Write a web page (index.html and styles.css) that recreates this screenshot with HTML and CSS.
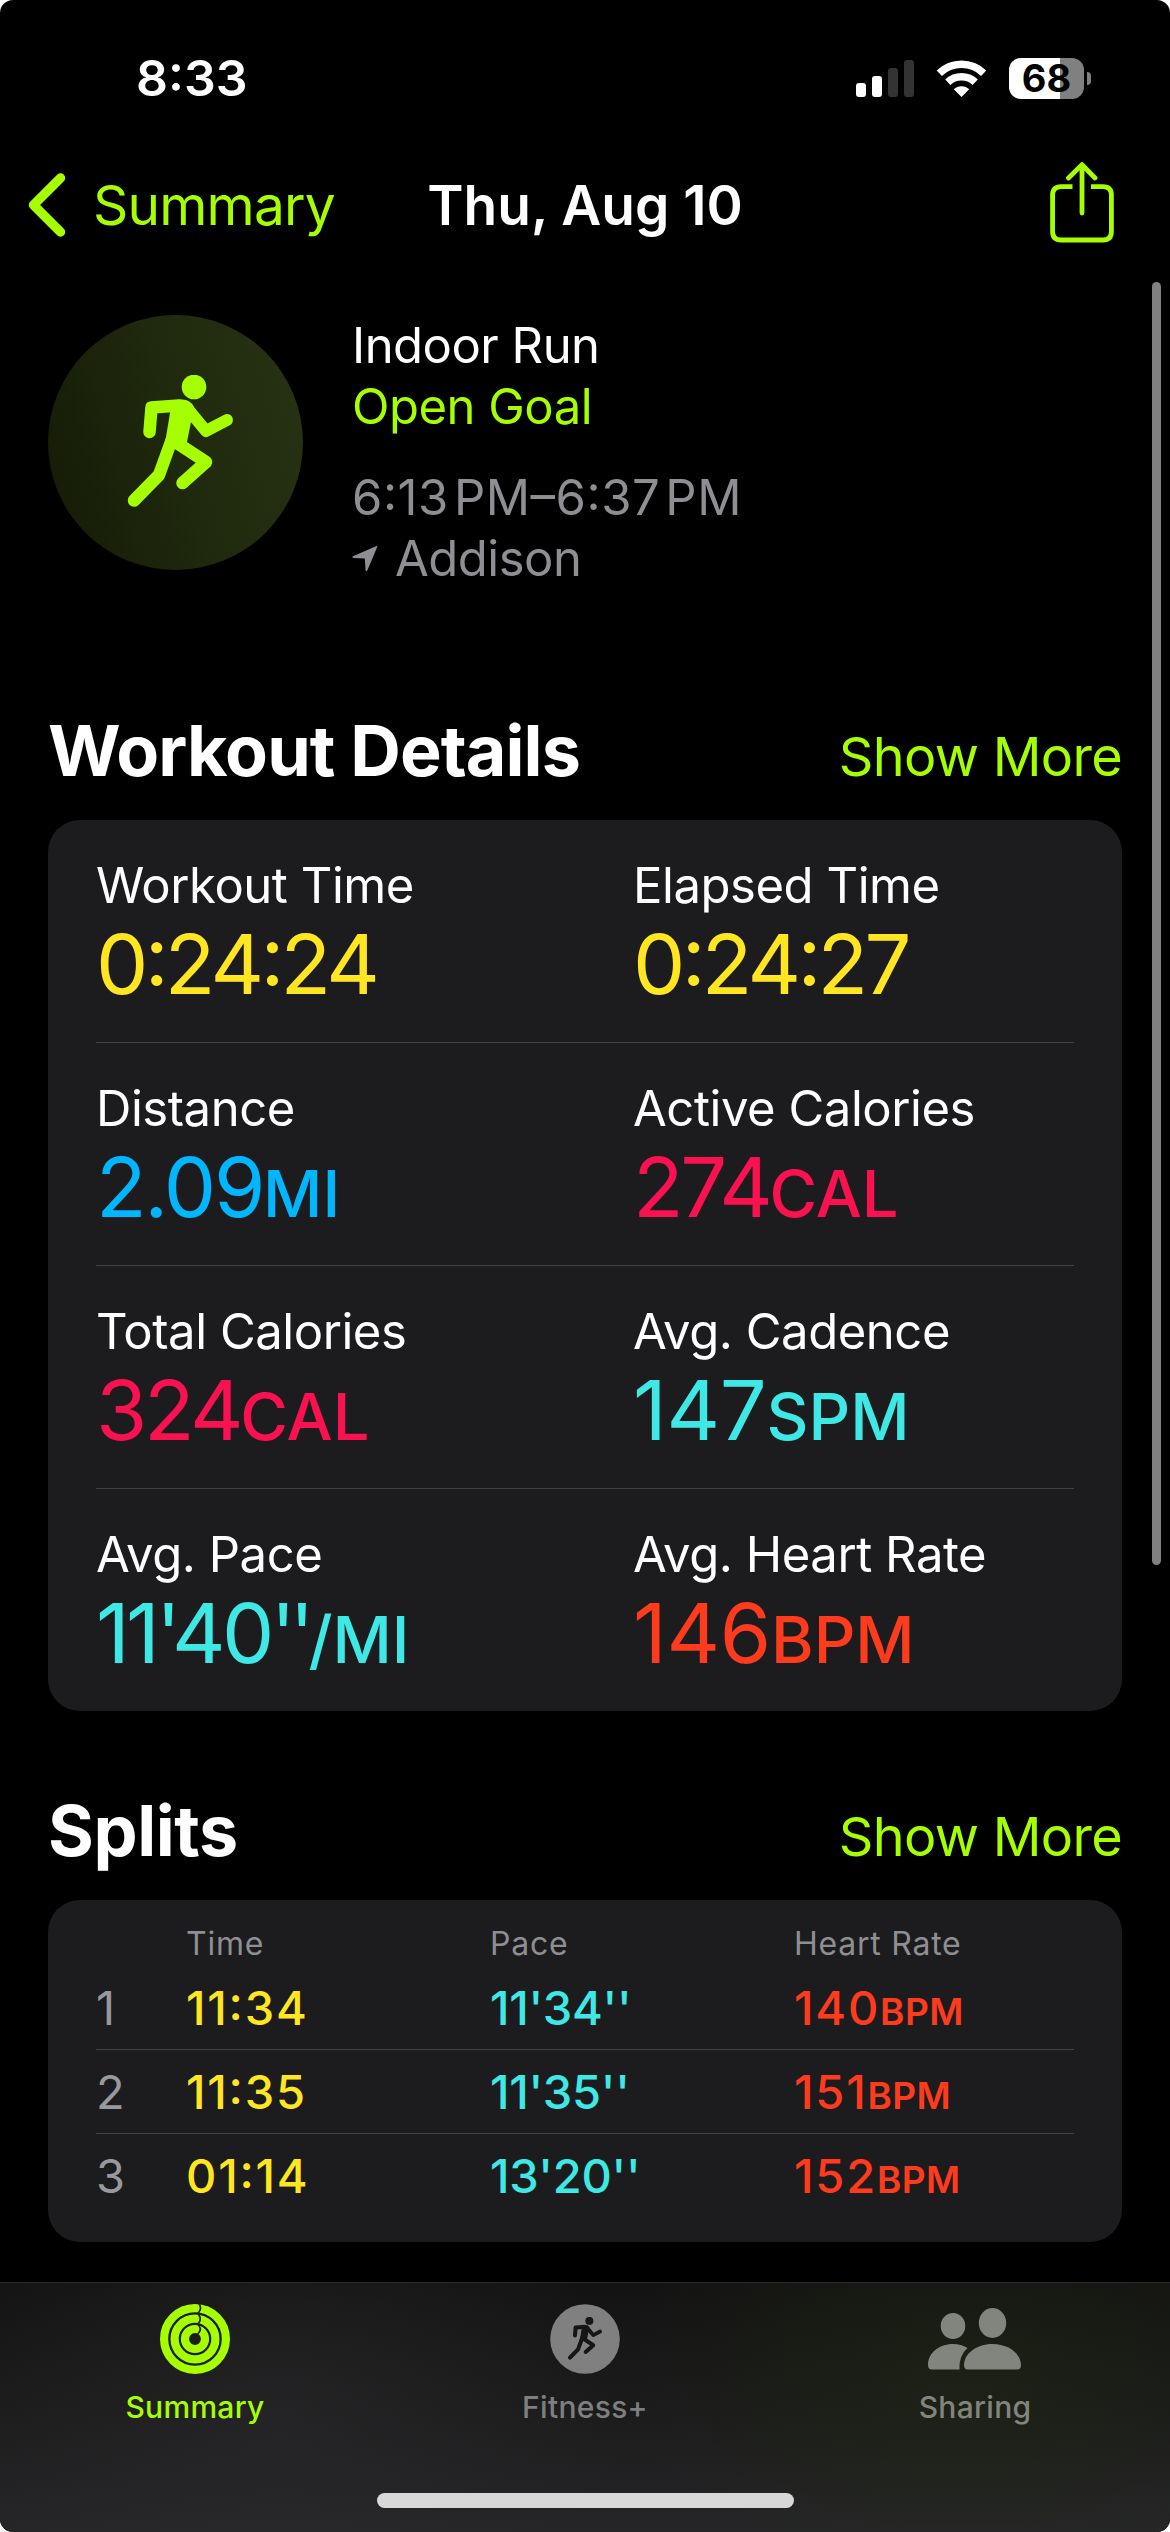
FILE: index.html
```html
<!DOCTYPE html>
<html lang="en">
<head>
    <meta charset="UTF-8">
    <meta name="viewport" content="width=device-width, initial-scale=1.0">
    <title>Thu, Aug 10</title>
    <link rel="stylesheet" href="styles.css">
</head>
<body>
    <svg class="defs" width="0" height="0">
        <symbol id="runner" viewBox="0 0 110 136">
            <circle cx="67" cy="12" r="12.3"/>
            <path d="M22.5 57 L24.5 32.5 L52 30.5" fill="none" stroke="currentColor" stroke-width="12.5" stroke-linecap="round" stroke-linejoin="round"/>
            <path d="M43 38 Q42 26 53 24.6 Q63 23.5 67 32 L60 67 L42 74 L37 74 Z"/>
            <path d="M60 33 L79 56 L100 45" fill="none" stroke="currentColor" stroke-width="12" stroke-linecap="round" stroke-linejoin="round"/>
            <path d="M50 68 L79 87 L55.5 108" fill="none" stroke="currentColor" stroke-width="12.5" stroke-linecap="round" stroke-linejoin="round"/>
            <path d="M45 64 L32 100 L7 125.500" fill="none" stroke="currentColor" stroke-width="12.5" stroke-linecap="round" stroke-linejoin="round"/>
        </symbol>
    </svg>

    <div class="screen">
        <header class="status-bar">
            <span class="clock">8:33</span>
            <div class="status-icons">
                <svg width="58" height="37" viewBox="0 0 58 37">
                    <rect x="0" y="23" width="10" height="14" rx="3" fill="#fff"/>
                    <rect x="16" y="16" width="10" height="21" rx="3" fill="#fff"/>
                    <rect x="32" y="8" width="10" height="29" rx="3" fill="#333"/>
                    <rect x="48" y="0" width="10" height="37" rx="3" fill="#333"/>
                </svg>
                <svg class="wifi" width="51" height="37" viewBox="0 0 51 37">
                    <path d="M3.3 13.2 A32 32 0 0 1 47.7 13.2" fill="none" stroke="#fff" stroke-width="7.5"/>
                    <path d="M11.8 22.2 A20 20 0 0 1 39.2 22.2" fill="none" stroke="#fff" stroke-width="7.5"/>
                    <path d="M25.5 37 L17.8 29.3 A11 11 0 0 1 33.2 29.3 Z" fill="#fff"/>
                </svg>
                <div class="battery"><span>68</span></div>
                <div class="battery-nub"></div>
            </div>
        </header>

        <nav class="nav-bar">
            <a class="back">
                <svg width="38" height="64" viewBox="0 0 38 64">
                    <path d="M32.5 5 L5.5 32 L32.5 59" fill="none" stroke="#a6ff00" stroke-width="9.5" stroke-linecap="round" stroke-linejoin="round"/>
                </svg>
                <span>Summary</span>
            </a>
            <h1>Thu, Aug 10</h1>
            <svg class="share" width="64" height="81" viewBox="0 0 64 81">
                <g fill="none" stroke="#a6ff00" stroke-width="4.8">
                    <path d="M22.5 24.6 H11 Q2.6 24.6 2.6 33 V69.5 Q2.6 78 11 78 H53 Q61.4 78 61.4 69.5 V33 Q61.4 24.6 53 24.6 H41"/>
                    <path d="M32 3 V51 M18.5 16 L32 2.6 L45 16" stroke-linecap="round" stroke-linejoin="round"/>
                </g>
            </svg>
        </nav>

        <main>
            <section class="hero">
                <div class="hero-icon">
                    <svg width="110" height="136"><use href="#runner"/></svg>
                </div>
                <div class="hero-text">
                    <p class="run">Indoor Run</p>
                    <p class="goal">Open Goal</p>
                    <p class="when">6:13&#8202;PM–6:37&#8202;PM</p>
                    <p class="place">
                        <svg width="26" height="27" viewBox="0 0 26 27">
                            <path d="M24 1.2 Q26 0 25 2.5 L15.5 25 Q14.3 27.5 13.5 25 L12.8 13.5 L1.5 13 Q-1 12 1.5 11 Z" fill="#8e8e93"/>
                        </svg>
                        <span>Addison</span>
                    </p>
                </div>
            </section>

            <section class="block details">
                <div class="block-head">
                    <h2>Workout Details</h2>
                    <a>Show More</a>
                </div>
                <div class="card">
                    <div class="detail-row">
                        <div class="detail"><p>Workout Time</p><div class="value time yellow">0:24:24</div></div>
                        <div class="detail"><p>Elapsed Time</p><div class="value time yellow">0:24:27</div></div>
                    </div>
                    <div class="detail-row">
                        <div class="detail"><p>Distance</p><div class="value distance blue">2.09<small>MI</small></div></div>
                        <div class="detail"><p>Active Calories</p><div class="value calories pink">274<small>CAL</small></div></div>
                    </div>
                    <div class="detail-row">
                        <div class="detail"><p>Total Calories</p><div class="value calories pink">324<small>CAL</small></div></div>
                        <div class="detail"><p>Avg. Cadence</p><div class="value teal">147<small>SPM</small></div></div>
                    </div>
                    <div class="detail-row">
                        <div class="detail"><p>Avg. Pace</p><div class="value time teal">11'40<span class="seconds">''</span><small>/MI</small></div></div>
                        <div class="detail"><p>Avg. Heart Rate</p><div class="value red">146<small>BPM</small></div></div>
                    </div>
                </div>
            </section>

            <section class="block splits">
                <div class="block-head">
                    <h2>Splits</h2>
                    <a>Show More</a>
                </div>
                <div class="card splits-card">
                    <div class="split-head"><span></span><span>Time</span><span>Pace</span><span>Heart Rate</span></div>
                    <div class="split-row">
                        <span class="index">1</span><span class="yellow">11:34</span><span class="pace teal">11'34''</span><span class="red">140<small>BPM</small></span>
                    </div>
                    <div class="split-row">
                        <span class="index">2</span><span class="yellow">11:35</span><span class="pace teal">11'35''</span><span class="red">151<small>BPM</small></span>
                    </div>
                    <div class="split-row">
                        <span class="index">3</span><span class="yellow">01:14</span><span class="pace teal">13'20''</span><span class="red">152<small>BPM</small></span>
                    </div>
                </div>
            </section>
        </main>

        <footer class="tab-bar">
            <div class="tabs">
                <a class="tab active">
                    <svg width="72" height="72" viewBox="0 0 72 72">
                        <g fill="none" stroke="#a6ff00" stroke-width="8.2">
                            <circle cx="36" cy="36" r="30.9"/>
                            <circle cx="36" cy="36" r="20.4"/>
                            <circle cx="36" cy="36" r="10"/>
                        </g>
                        <g fill="none" stroke="#20211f" stroke-width="1.7">
                            <path d="M40 0.5 Q43 5 40 9 L38.5 10.5"/>
                            <path d="M39 10.8 Q43 15.5 40 19.5 L38.5 21"/>
                            <path d="M39 21.3 Q43 26 40 29.5 L38 31.5"/>
                        </g>
                    </svg>
                    <span>Summary</span>
                </a>
                <a class="tab">
                    <svg width="72" height="72" viewBox="0 0 72 72">
                        <circle cx="36" cy="36" r="34.8" fill="#808080"/>
                        <use href="#runner" class="tab-runner" x="18.5" y="14" width="36" height="44"/>
                    </svg>
                    <span>Fitness+</span>
                </a>
                <a class="tab sharing">
                    <svg width="96" height="72" viewBox="0 0 96 72" fill="#82857d">
                        <ellipse cx="26" cy="23" rx="12.3" ry="13"/>
                        <ellipse cx="65.5" cy="20" rx="13.7" ry="15"/>
                        <path d="M5 66.5 Q1 66.5 1 62 C1 50 12 41 26 41 Q34 41 40.5 45 Q31.5 53 32.5 66.5 Z"/>
                        <path d="M41 66.5 Q37 66.5 37 62 C37 51 49 41 65.5 41 C82 41 94 51 94 62 Q94 66.5 90 66.5 Z"/>
                    </svg>
                    <span>Sharing</span>
                </a>
            </div>
            <div class="home-indicator"></div>
        </footer>

        <div class="scroll-thumb"></div>
    </div>
</body>
</html>
```
FILE: styles.css
```css
* {
    box-sizing: border-box;
}
body {
    margin: 0;
    background: #fff;
    font-family: Inter, "Liberation Sans", sans-serif;
    font-feature-settings: "calt" 1; /* keeps the raised colon in times */
    color: #fff;
}
h1, h2, p {
    margin: 0;
}
svg {
    display: block;
    flex: none;
}
.defs {
    position: absolute;
}
.screen {
    position: relative;
    width: 1170px;
    height: 2532px;
    background: #000;
    border-radius: 13px;
    overflow: hidden;
    display: flex;
    flex-direction: column;
}

/* status bar */
.status-bar {
    height: 156px;
    padding: 0 79px 0 136px;
    display: flex;
    justify-content: space-between;
    align-items: center;
}
.clock {
    font-size: 50px;
    font-weight: 600;
}
.status-icons {
    display: flex;
    align-items: center;
}
.wifi {
    margin: 0 22px;
}
.battery {
    width: 75px;
    height: 41px;
    border-radius: 12px;
    background: linear-gradient(90deg, #fff 51px, #808080 51px);
    color: #000;
    font-size: 38px;
    font-weight: 700;
    line-height: 41px;
    text-align: center;
}
.battery-nub {
    width: 4px;
    height: 13px;
    margin-left: 3px;
    border-radius: 0 4px 4px 0;
    background: #808080;
}

/* nav bar */
.nav-bar {
    height: 98px;
    padding: 0 28px;
    display: grid;
    grid-template-columns: 1fr auto 1fr;
    align-items: center;
}
.back {
    display: flex;
    align-items: center;
    gap: 27px;
    font-size: 55px;
    letter-spacing: -0.8px;
    color: #a6ff00;
}
.nav-bar h1 {
    font-size: 55px;
    font-weight: 600;
}
.share {
    justify-self: end;
    margin: 0 28px 5px 0;
}

/* hero */
.hero {
    height: 336px;
    padding: 61px 48px 0;
    display: flex;
    gap: 49px;
}
.hero-icon {
    width: 255px;
    height: 255px;
    padding-left: 13px;
    border-radius: 50%;
    background: linear-gradient(75deg, #151a06, #1f290d 50%, #283314);
    color: #a6ff00;
    fill: #a6ff00;
    display: flex;
    justify-content: center;
    align-items: center;
}
.hero-text {
    font-size: 49px;
    line-height: 61px;
    letter-spacing: -0.5px;
}
.goal {
    color: #a6ff00;
}
.when {
    margin-top: 30px;
    letter-spacing: 0.55px;
    color: #8e8e93;
}
.place {
    display: flex;
    align-items: center;
    gap: 17px;
    color: #8e8e93;
}

/* sections */
.block {
    padding: 119px 48px 0;
}
.block.splits {
    padding-top: 78px;
}
.block-head {
    height: 84px;
    margin-bottom: 27px;
    display: flex;
    justify-content: space-between;
    align-items: baseline;
}
.block-head h2 {
    font-size: 70px;
    line-height: 84px;
    font-weight: 700;
    letter-spacing: -0.9px;
}
.splits .block-head h2 {
    letter-spacing: -0.4px;
}
.block-head a {
    font-size: 54px;
    line-height: 60px;
    letter-spacing: -0.7px;
    color: #a6ff00;
}
.card {
    background: #1c1c1e;
    border-radius: 32px;
}

/* workout details */
.detail-row {
    position: relative;
    height: 223px;
    display: grid;
    grid-template-columns: 1fr 1fr;
}
.detail-row:last-child {
    height: 222px;
}
.detail-row:not(:last-child)::after {
    content: "";
    position: absolute;
    left: 48px;
    right: 48px;
    bottom: 0;
    height: 1px;
    background: #414144;
}
.detail {
    padding: 36px 0 0 48px;
}
.detail p {
    font-size: 49px;
    line-height: 60px;
    letter-spacing: -0.45px;
}
.value {
    font-size: 83px;
    line-height: 97px;
    letter-spacing: -0.3px;
    white-space: nowrap;
}
.value.time {
    letter-spacing: -3.7px;
}
.value.distance {
    letter-spacing: -2.3px;
}
.value.calories {
    letter-spacing: -3.3px;
}
.value .seconds {
    letter-spacing: -6px;
}
.value small {
    font-size: 65px;
    font-weight: 500;
    letter-spacing: 0;
}
.yellow {
    color: #ffe620;
}
.blue {
    color: #00b7ff;
}
.pink {
    color: #fa114f;
}
.teal {
    color: #3ee8e4;
}
.red {
    color: #ff3b1d;
}

/* splits */
.splits-card {
    height: 342px;
    padding: 24px 48px;
}
.split-head, .split-row {
    display: grid;
    grid-template-columns: 90px 304px 304px 1fr;
}
.split-head {
    height: 42px;
    font-size: 32px;
    line-height: 40px;
    letter-spacing: 0.75px;
    color: #8e8e93;
}
.split-row {
    height: 84px;
    border-bottom: 1px solid #414144;
    font-size: 47px;
    font-weight: 500;
    line-height: 84px;
    letter-spacing: 1.8px;
}
.split-row:last-child {
    border-bottom: none;
}
.split-row small {
    font-size: 37px;
    font-weight: 600;
    letter-spacing: 0.4px;
}
.split-row .pace {
    letter-spacing: -0.3px;
}
.index {
    font-weight: 400;
    color: #98989d;
}

/* tab bar */
.tab-bar {
    height: 250px;
    margin-top: auto;
    padding: 20px 0 24px;
    border-top: 1px solid #2b2c2a;
    background:
        radial-gradient(ellipse 330px 210px at 960px 90px, rgba(32, 42, 14, .45), transparent),
        radial-gradient(ellipse 340px 260px at 280px 130px, rgba(44, 44, 46, .5), transparent),
        linear-gradient(#131313, #1b1b1c 50%, #262628);
    display: flex;
    flex-direction: column;
    justify-content: space-between;
    align-items: center;
}
.tabs {
    width: 100%;
    display: grid;
    grid-template-columns: repeat(3, 1fr);
}
.tab {
    display: flex;
    flex-direction: column;
    align-items: center;
    gap: 14px;
    font-size: 30px;
    line-height: 36px;
    font-weight: 500;
    letter-spacing: 0.3px;
    color: #7f7f7f;
}
.tab.active {
    color: #a6ff00;
}
.tab.sharing {
    color: #82857d;
}
.tab-runner {
    color: #161616;
    fill: #161616;
}
.home-indicator {
    width: 417px;
    height: 15px;
    border-radius: 8px;
    background: #d8d8d8;
}

.scroll-thumb {
    position: absolute;
    top: 282px;
    left: 1152px;
    width: 9px;
    height: 1283px;
    border-radius: 5px;
    background: #808080;
}
```
